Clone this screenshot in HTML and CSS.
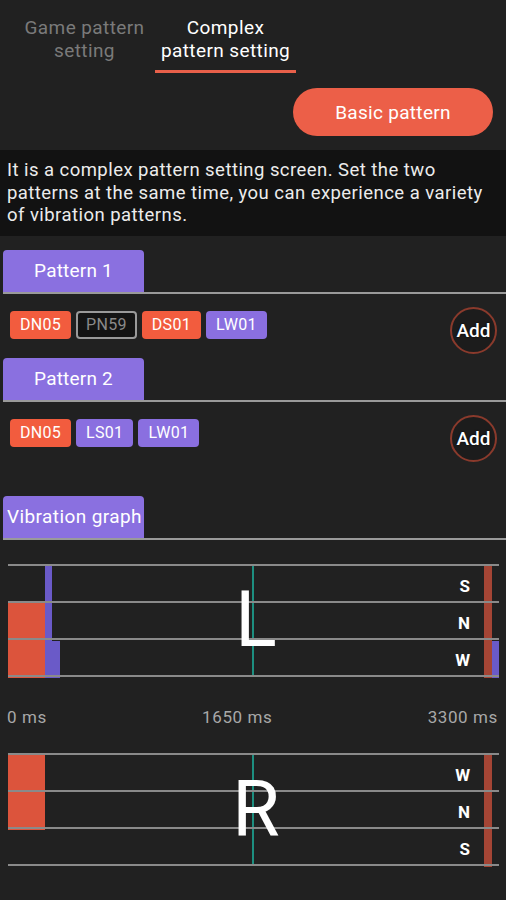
FILE: index.html
```html
<!DOCTYPE html>
<html lang="en">
<head>
<meta charset="utf-8">
<title>Complex pattern setting</title>
<link rel="stylesheet" href="styles.css">
</head>
<body>
<div class="screen">
  <nav class="tabs">
    <div class="tab">Game pattern<br>setting</div>
    <div class="tab active">Complex<br>pattern setting</div>
  </nav>

  <div class="actions">
    <button class="basic-btn">Basic pattern</button>
  </div>

  <p class="desc">It is a complex pattern setting screen. Set the two patterns at the same time, you can experience a variety of vibration patterns.</p>

  <section class="section">
    <div class="sec-head"><div class="sec-tab">Pattern 1</div></div>
    <div class="chip-row">
      <div class="chips">
        <span class="chip red">DN05</span>
        <span class="chip off">PN59</span>
        <span class="chip red">DS01</span>
        <span class="chip purple">LW01</span>
      </div>
      <button class="add">Add</button>
    </div>
  </section>

  <section class="section">
    <div class="sec-head"><div class="sec-tab">Pattern 2</div></div>
    <div class="chip-row">
      <div class="chips">
        <span class="chip red">DN05</span>
        <span class="chip purple">LS01</span>
        <span class="chip purple">LW01</span>
      </div>
      <button class="add">Add</button>
    </div>
  </section>

  <section class="section graph-sec">
    <div class="sec-head"><div class="sec-tab left">Vibration graph</div></div>

    <div class="graph">
      <div class="grow"><span class="lab">S</span></div>
      <div class="grow"><span class="lab">N</span></div>
      <div class="grow"><span class="lab">W</span></div>
      <div class="bar red" style="left:0;width:37px;top:37px;height:75px"></div>
      <div class="bar purple" style="left:37px;width:7px;top:0;height:75px"></div>
      <div class="bar purple" style="left:37px;width:15px;top:75px;height:37px"></div>
      <div class="bar dred" style="left:476px;width:8px;top:0;height:112px"></div>
      <div class="bar purple" style="left:484px;width:7px;top:75px;height:37px"></div>
      <div class="cursor"></div>
      <div class="big">L</div>
    </div>

    <div class="axis">
      <span>0 ms</span>
      <span>1650 ms</span>
      <span>3300 ms</span>
    </div>

    <div class="graph">
      <div class="grow"><span class="lab">W</span></div>
      <div class="grow"><span class="lab">N</span></div>
      <div class="grow"><span class="lab">S</span></div>
      <div class="bar red" style="left:0;width:37px;top:0;height:75px"></div>
      <div class="bar dred" style="left:476px;width:8px;top:0;height:112px"></div>
      <div class="cursor"></div>
      <div class="big">R</div>
    </div>
  </section>
</div>
</body>
</html>
```

FILE: styles.css
```css
* { box-sizing: border-box; }
html, body {
  margin: 0;
  padding: 0;
  background: #212121;
}
body {
  font-family: Roboto, "Noto Sans", sans-serif;
  color: #fff;
  width: 506px;
  height: 900px;
  overflow: hidden;
}
.screen {
  display: flex;
  flex-direction: column;
}

/* top tabs */
.tabs {
  display: flex;
  padding: 16px 0 0 14px;
}
.tab {
  width: 141px;
  text-align: center;
  font-size: 19px;
  letter-spacing: 0.4px;
  line-height: 23px;
  color: #7a7a7a;
  padding-bottom: 8px;
  border-bottom: 3px solid transparent;
}
.tab.active {
  color: #fff;
  border-bottom-color: #e8604a;
}

.actions {
  display: flex;
  justify-content: flex-end;
  padding: 15px 13px 0 0;
}
.basic-btn {
  width: 200px;
  height: 48px;
  border: none;
  border-radius: 24px;
  background: #ec5f48;
  color: #fff;
  font-family: Roboto, sans-serif;
  font-size: 19px;
  letter-spacing: 0.3px;
  padding: 0;
}

.desc {
  margin: 14px 0 0;
  background: #121212;
  padding: 9px 8px 9px 7px;
  font-size: 18.5px;
  letter-spacing: 0.45px;
  line-height: 22.5px;
  color: #ececec;
}

/* sections */
.section {
  margin-top: 14px;
}
.section + .section { margin-top: 4px; }
.section.graph-sec { margin-top: 34px; }

.sec-head {
  margin-left: 3px;
  border-bottom: 2px solid #9a9a9a;
}
.sec-tab {
  width: 141px;
  height: 42px;
  background: #8a70e0;
  border-radius: 4px 4px 0 0;
  text-align: center;
  line-height: 42px;
  font-size: 19px;
  letter-spacing: 0.2px;
  color: #fff;
}
.sec-tab.left {
  text-align: left;
  padding-left: 4px;
  letter-spacing: 0.4px;
}

.chip-row {
  display: flex;
  justify-content: space-between;
  align-items: flex-start;
  padding: 13px 9px 0 10px;
}
.chips {
  display: flex;
  gap: 5px;
  margin-top: 4px;
}
.chip {
  height: 28px;
  line-height: 28px;
  padding: 0 10px;
  border-radius: 4px;
  font-size: 16px;
  letter-spacing: 0.3px;
  color: #fff;
}
.chip.red { background: #f25c3e; }
.chip.purple { background: #8a6fe0; }
.chip.off {
  background: #141414;
  border: 2px solid #9a9a9a;
  color: #8a8a8a;
  line-height: 24px;
  padding: 0 8px;
}
.add {
  width: 47px;
  height: 47px;
  border-radius: 50%;
  border: 2px solid #8a3a2c;
  background: #1c1c1c;
  color: #fff;
  font-family: Roboto, sans-serif;
  font-size: 19px;
  font-weight: 500;
  padding: 0;
  text-shadow: 0 0 2px #000;
}

/* graph */
.graph {
  position: relative;
  margin: 24px 7px 0 8px;
  height: 113px;
  border-top: 2px solid #8a8a8a;
  display: flex;
  flex-direction: column;
}
.grow {
  height: 37px;
  border-bottom: 2px solid #8a8a8a;
  display: flex;
  align-items: center;
  justify-content: flex-end;
  padding-right: 29px;
  position: relative;
  z-index: 3;
}
.lab {
  font-size: 17px;
  font-weight: 700;
  color: #fff;
  margin-top: 5px;
}
.bar {
  position: absolute;
  z-index: 1;
}
.bar.red { background: #dc543c; }
.bar.purple { background: #6a5ac8; }
.bar.dred { background: #a54535; }
.cursor {
  position: absolute;
  left: 244px;
  top: 0;
  bottom: 0;
  width: 2px;
  background: #1d8f80;
  z-index: 2;
}
.big {
  position: absolute;
  left: 0;
  right: 0;
  top: 14px;
  text-align: center;
  font-size: 77px;
  line-height: 80px;
  color: #fff;
  z-index: 4;
  padding-left: 5px;
}

.axis {
  display: flex;
  justify-content: space-between;
  padding: 0 8px 0 7px;
  margin-top: 30px;
  font-size: 17px;
  letter-spacing: 0.6px;
  line-height: 20px;
  color: #a8a8a8;
}
.axis + .graph { margin-top: 26px; }
```
